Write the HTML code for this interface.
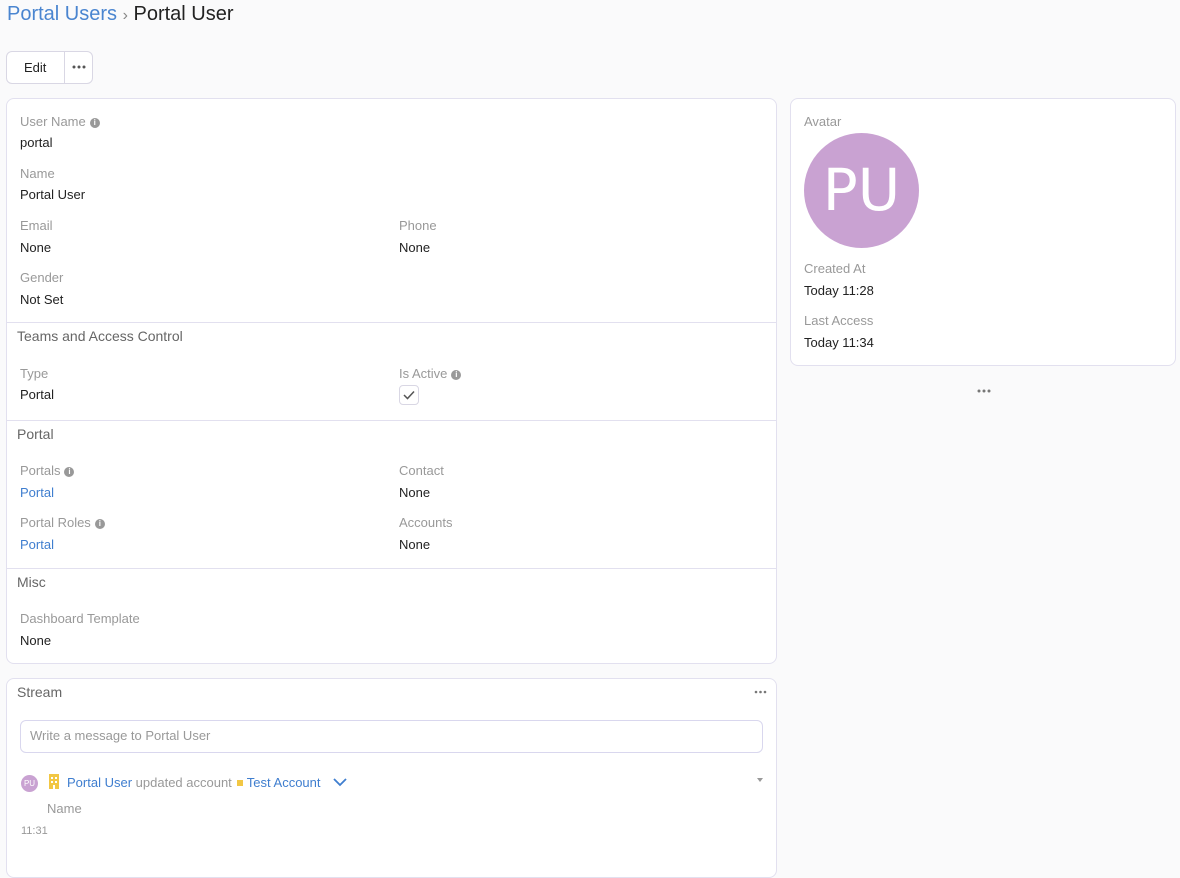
<!DOCTYPE html>
<html><head><meta charset="utf-8"><style>
*{box-sizing:border-box;margin:0;padding:0}
body{width:1180px;height:849px;background:#fafafb;font-family:"Liberation Sans",sans-serif;font-size:13px;color:#222;position:relative;overflow:hidden}
.a{position:absolute;white-space:nowrap}
.l{color:#999}
.lk{color:#3f7ecf}
.card{position:absolute;background:#fff;border:1px solid #e2e0ef;border-radius:8px}
.hr{position:absolute;left:7px;width:770px;height:1px;background:#e2e0ef}
.h{color:#666;font-size:14px}
.i{display:inline-block;width:10px;height:10px;border-radius:50%;background:#999;color:#fff;font-size:8px;font-weight:bold;text-align:center;line-height:10px;vertical-align:1px;margin-left:4px}
</style></head><body>
<div class="a" style="left:7px;top:3px;font-size:20px"><span class="lk" style="color:#4a85d0">Portal Users</span> <span style="color:#888;font-size:16px">›</span> Portal User</div>
<div class="a" style="left:6px;top:51px;width:87px;height:33px;border:1px solid #d9d7e4;border-radius:6px;background:#fff"></div>
<div class="a" style="left:64px;top:52px;width:1px;height:31px;background:#d9d7e4"></div>
<div class="a" style="left:24px;top:60px">Edit</div>
<svg class="a" style="left:72px;top:65px" width="14" height="4"><g fill="#555"><circle cx="2" cy="2" r="1.5"/><circle cx="7" cy="2" r="1.5"/><circle cx="12" cy="2" r="1.5"/></g></svg>

<div class="card" style="left:6px;top:98px;width:771px;height:566px"></div>
<div class="a l" style="left:20px;top:114px">User Name<span class="i">i</span></div>
<div class="a" style="left:20px;top:135px">portal</div>
<div class="a l" style="left:20px;top:166px">Name</div>
<div class="a" style="left:20px;top:187px">Portal User</div>
<div class="a l" style="left:20px;top:218px">Email</div>
<div class="a" style="left:20px;top:240px">None</div>
<div class="a l" style="left:399px;top:218px">Phone</div>
<div class="a" style="left:399px;top:240px">None</div>
<div class="a l" style="left:20px;top:270px">Gender</div>
<div class="a" style="left:20px;top:292px">Not Set</div>
<div class="hr" style="top:322px"></div>
<div class="a h" style="left:17px;top:328px">Teams and Access Control</div>
<div class="a l" style="left:20px;top:366px">Type</div>
<div class="a" style="left:20px;top:387px">Portal</div>
<div class="a l" style="left:399px;top:366px">Is Active<span class="i">i</span></div>
<div class="a" style="left:399px;top:385px;width:20px;height:20px;border:1px solid #d9d7e4;border-radius:4px"></div>
<svg class="a" style="left:402px;top:389px" width="14" height="12"><path d="M2 6l3.5 3.5L12 2.5" fill="none" stroke="#555" stroke-width="1.5"/></svg>
<div class="hr" style="top:420px"></div>
<div class="a h" style="left:17px;top:426px">Portal</div>
<div class="a l" style="left:20px;top:463px">Portals<span class="i">i</span></div>
<div class="a lk" style="left:20px;top:485px">Portal</div>
<div class="a l" style="left:399px;top:463px">Contact</div>
<div class="a" style="left:399px;top:485px">None</div>
<div class="a l" style="left:20px;top:515px">Portal Roles<span class="i">i</span></div>
<div class="a lk" style="left:20px;top:537px">Portal</div>
<div class="a l" style="left:399px;top:515px">Accounts</div>
<div class="a" style="left:399px;top:537px">None</div>
<div class="hr" style="top:568px"></div>
<div class="a h" style="left:17px;top:574px">Misc</div>
<div class="a l" style="left:20px;top:611px">Dashboard Template</div>
<div class="a" style="left:20px;top:633px">None</div>

<div class="card" style="left:790px;top:98px;width:386px;height:268px"></div>
<div class="a l" style="left:804px;top:114px">Avatar</div>
<div class="a" style="left:804px;top:133px;width:115px;height:115px;border-radius:50%;background:#c9a2d2;color:#fff;font-family:'DejaVu Sans',sans-serif;font-size:58px;text-align:center;line-height:115px">PU</div>
<div class="a l" style="left:804px;top:261px">Created At</div>
<div class="a" style="left:804px;top:283px">Today 11:28</div>
<div class="a l" style="left:804px;top:313px">Last Access</div>
<div class="a" style="left:804px;top:335px">Today 11:34</div>
<svg class="a" style="left:977px;top:389px" width="14" height="4"><g fill="#777"><circle cx="2" cy="2" r="1.5"/><circle cx="7" cy="2" r="1.5"/><circle cx="12" cy="2" r="1.5"/></g></svg>

<div class="card" style="left:6px;top:678px;width:771px;height:200px"></div>
<div class="a h" style="left:17px;top:684px">Stream</div>
<svg class="a" style="left:754px;top:690px" width="13" height="4"><g fill="#777"><circle cx="2" cy="2" r="1.3"/><circle cx="6.5" cy="2" r="1.3"/><circle cx="11" cy="2" r="1.3"/></g></svg>
<div class="a" style="left:20px;top:720px;width:743px;height:33px;border:1px solid #d9d7ee;border-radius:6px;background:#fff"></div>
<div class="a l" style="left:30px;top:728px">Write a message to Portal User</div>
<div class="a" style="left:21px;top:775px;width:17px;height:17px;border-radius:50%;background:#c9a2d2;color:#fff;font-size:8px;text-align:center;line-height:17px">PU</div>
<svg class="a" style="left:48px;top:774px" width="12" height="15"><rect x="1" y="0" width="10" height="15" fill="#f2c744"/><g fill="#fff"><rect x="3" y="3" width="2" height="2"/><rect x="7" y="3" width="2" height="2"/><rect x="3" y="7" width="2" height="2"/><rect x="7" y="7" width="2" height="2"/><rect x="5" y="11" width="2" height="4"/></g></svg>
<div class="a" style="left:67px;top:775px"><span class="lk">Portal User</span> <span class="l">updated account</span><span style="display:inline-block;width:6px;height:6px;background:#f2c744;vertical-align:1px;margin:0 4px 0 5px"></span><span class="lk">Test Account</span></div>
<svg class="a" style="left:333px;top:777px" width="14" height="10"><path d="M1 2l6 6 6-6" fill="none" stroke="#3f7ecf" stroke-width="1.8"/></svg>
<div class="a" style="left:757px;top:778px;width:0;height:0;border-left:3px solid transparent;border-right:3px solid transparent;border-top:4px solid #999"></div>
<div class="a l" style="left:47px;top:801px">Name</div>
<div class="a l" style="left:21px;top:825px;font-size:11px">11:31</div>
</body></html>
